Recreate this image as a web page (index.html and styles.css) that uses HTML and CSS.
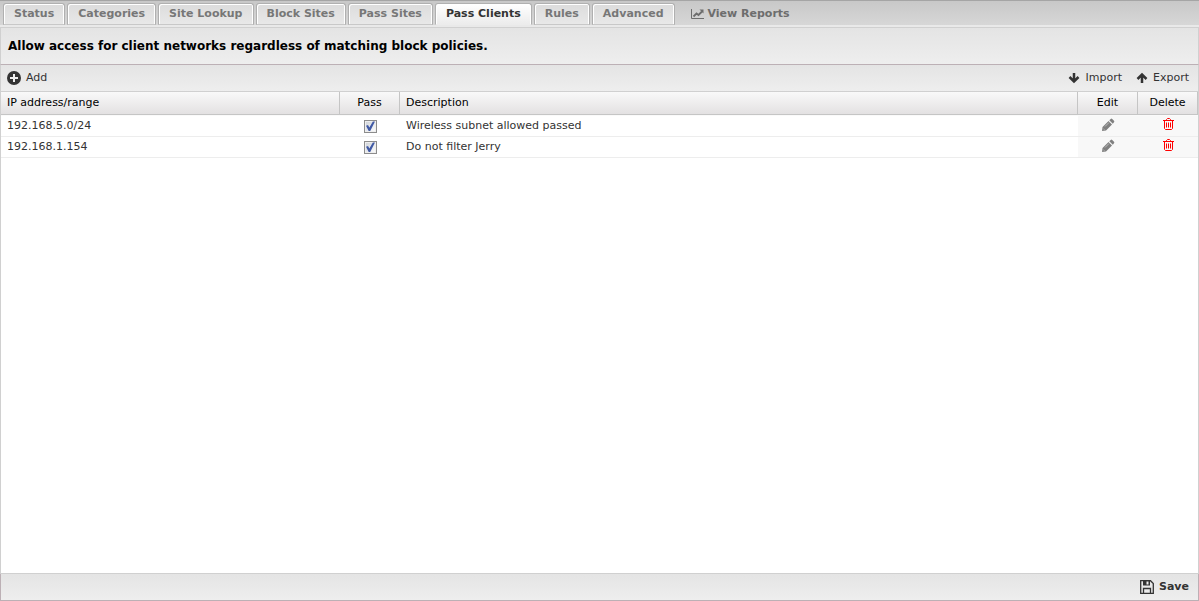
FILE: index.html
```html
<!DOCTYPE html>
<html lang="en">
<head>
<meta charset="utf-8">
<title>Pass Clients</title>
<link rel="stylesheet" href="styles.css">
</head>
<body>
<svg class="defs" aria-hidden="true">
  <symbol id="pencil" viewBox="0 0 14 14">
    <path d="M1 13 L1.500 9 L7.500 3 L11 6.500 L5 12.500 Z M8.300 2.200 L9.700 .9 Q10.500 .3 11.200 .9 L13 2.700 Q13.700 3.500 13 4.300 L11.800 5.700 Z"/>
    <path class="pencil-shine" d="M4 8.500 L8 4.500 M2.300 10.600 L3.400 11.700"/>
  </symbol>
  <symbol id="trash" viewBox="0 0 12 12">
    <path d="M1 2.500 H12 M4.500 2.500 V1.500 L5.500 .5 H7.500 L8.500 1.500 V2.500 M2.500 2.500 V10.500 L3.500 11.500 H9.500 L10.500 10.500 V2.500 M4.500 4.500 V9.500 M6.500 4.500 V9.500 M8.500 4.500 V9.500"/>
  </symbol>
</svg>
<div class="app">
  <nav class="tabs">
    <button class="tab">Status</button>
    <button class="tab">Categories</button>
    <button class="tab">Site Lookup</button>
    <button class="tab">Block Sites</button>
    <button class="tab">Pass Sites</button>
    <button class="tab tab-active">Pass Clients</button>
    <button class="tab">Rules</button>
    <button class="tab">Advanced</button>
    <a class="reports" href="#reports">
      <svg width="14" height="12" viewBox="0 0 14 12"><path d="M.5 1 V10.500 H13" fill="none" stroke="currentColor"/><path d="M2.500 8.500 L5.500 5.500 L7.500 7 L11 3.500" fill="none" stroke="currentColor" stroke-width="1.800"/><path d="M8.500 1.500 H12.500 V5.500 Z" fill="currentColor"/></svg>
      View Reports
    </a>
  </nav>
  <h1 class="title">Allow access for client networks regardless of matching block policies.</h1>
  <div class="toolbar">
    <button class="tool">
      <svg width="14" height="14" viewBox="0 0 14 14"><circle cx="7" cy="7" r="7" fill="#333"/><path d="M7 3 V11 M3 7 H11" stroke="#eee" stroke-width="2"/></svg>
      Add
    </button>
    <span class="spacer"></span>
    <button class="tool">
      <svg width="12" height="12" viewBox="0 0 12 12"><path d="M6 1 V9.500 M1.500 5 L6 9.500 L10.500 5" fill="none" stroke="#333" stroke-width="2.500"/></svg>
      Import
    </button>
    <button class="tool">
      <svg width="12" height="12" viewBox="0 0 12 12"><path d="M6 11 V2.500 M1.500 7 L6 2.500 L10.500 7" fill="none" stroke="#333" stroke-width="2.500"/></svg>
      Export
    </button>
  </div>
  <main class="content">
    <table class="grid">
      <colgroup><col class="col-address"><col class="col-small"><col><col class="col-small"><col class="col-small"></colgroup>
      <thead>
        <tr><th>IP address/range</th><th class="center">Pass</th><th>Description</th><th class="center">Edit</th><th class="center">Delete</th></tr>
      </thead>
      <tbody>
        <tr>
          <td>192.168.5.0/24</td>
          <td class="center"><input class="check" type="checkbox" checked aria-label="Pass 192.168.5.0/24"></td>
          <td>Wireless subnet allowed passed</td>
          <td class="action"><button class="icon-button" aria-label="Edit"><svg class="pencil"><use href="#pencil"/></svg></button></td>
          <td class="action"><button class="icon-button" aria-label="Delete"><svg class="trash"><use href="#trash"/></svg></button></td>
        </tr>
        <tr>
          <td>192.168.1.154</td>
          <td class="center"><input class="check" type="checkbox" checked aria-label="Pass 192.168.1.154"></td>
          <td>Do not filter Jerry</td>
          <td class="action"><button class="icon-button" aria-label="Edit"><svg class="pencil"><use href="#pencil"/></svg></button></td>
          <td class="action"><button class="icon-button" aria-label="Delete"><svg class="trash"><use href="#trash"/></svg></button></td>
        </tr>
      </tbody>
    </table>
  </main>
  <footer class="footer">
    <button class="tool save">
      <svg width="14" height="14" viewBox="0 0 14 14"><path d="M.7 .7 H10.500 L13.300 3.500 V13.300 H.7 Z M3.500 13 V8.500 H10.500 V13" fill="none" stroke="#333" stroke-width="1.300"/><path d="M3 1 H10 V5.500 H3 Z" fill="#333"/><path d="M6.500 1.500 H8.500 V4.500 H6.500 Z" fill="#eee"/></svg>
      Save
    </button>
  </footer>
</div>
</body>
</html>
```

FILE: styles.css
```css
* { box-sizing: border-box; }

body {
  margin: 0;
  font: 11px/14px "DejaVu Sans", Verdana, sans-serif;
  color: #333;
}

button {
  font: inherit;
  color: inherit;
  border: 0;
  padding: 0;
  background: none;
}

svg { flex: none; }
.defs { display: none; }

.app {
  display: flex;
  flex-direction: column;
  min-height: 100vh;
}

.tabs {
  display: flex;
  align-items: flex-end;
  gap: 2px;
  height: 27px;
  padding: 1px 3px 2px;
  border-top: 1px solid #a5a5a5;
  background: linear-gradient(#e9e9e9, #e9e9e9) bottom / 100% 2px no-repeat, linear-gradient(#c8c8c8, #d8d8d8);
}

.tab {
  height: 22px;
  padding: 0 10px 1px;
  border: 1px solid #b0b0b0;
  border-bottom-color: #c8c8c8;
  border-radius: 3px 3px 0 0;
  background: linear-gradient(#dcdcdc, #e8e8e8);
  box-shadow: inset 1px 1px #fff, inset -1px 0 #fff;
  font-weight: bold;
  color: #777;
}

.tab-active {
  background: linear-gradient(#fff, #ececec);
  border-bottom-color: #ececec;
  color: #333;
}

.reports {
  display: flex;
  align-items: center;
  gap: 3px;
  height: 22px;
  padding: 0 14px 1px;
  font-weight: bold;
  color: #6d6d6d;
  text-decoration: none;
}

.title {
  margin: 0;
  padding: 10px 7px;
  border: 1px solid #d0d0d0;
  border-bottom-color: #bcb0b5;
  background: linear-gradient(#e4e4e4, #eee);
  font-size: 12px;
  line-height: 16px;
  color: #000;
}

.toolbar, .footer {
  display: flex;
  align-items: center;
  gap: 14px;
  height: 26px;
  padding: 0 9px 0 6px;
  border: solid #d0d0d0;
  border-width: 0 1px;
  background: linear-gradient(#e4e4e4, #eee);
}

.tool {
  display: flex;
  align-items: center;
  gap: 5px;
}

.spacer { flex: 1; }

.content {
  flex: 1;
  border: 1px solid #d0d0d0;
  background: #fff;
}

.grid {
  width: 100%;
  table-layout: fixed;
  border-collapse: separate;
  border-spacing: 0;
}

.col-address { width: 339px; }
.col-small { width: 60px; }

.grid th {
  height: 23px;
  padding: 0 6px;
  border-right: 1px solid #c5c5c5;
  border-bottom: 1px solid #c5c5c5;
  background: linear-gradient(#f9f9f9, #e3e1e2);
  font-weight: normal;
  text-align: left;
  color: #000;
}

.grid td {
  height: 21px;
  padding: 0 6px;
  border-bottom: 1px solid #ededed;
}

.grid tbody tr:first-child td { border-top: 1px solid #fafafa; height: 22px; }

.grid th.center, .grid td.center { text-align: center; }

.grid td.action {
  padding: 0 0 2px;
  background: #f8f8f8;
  text-align: center;
}

.check {
  appearance: none;
  display: block;
  width: 13px;
  height: 13px;
  margin: 0 auto;
  border: 1px solid #8c8c8c;
  background: linear-gradient(135deg, #ccd0d6, #fff);
  box-shadow: inset 0 0 0 1px #eee;
}

.check:checked::after {
  content: "";
  display: block;
  width: 11px;
  height: 11px;
  background: #4059a5;
  clip-path: polygon(14% 48%, 32% 42%, 44% 64%, 76% 8%, 95% 8%, 52% 95%, 38% 95%);
}

.icon-button { display: block; margin: 0 auto; }
.icon-button svg { display: block; }
.pencil { width: 14px; height: 14px; fill: #808080; }
.pencil-shine { fill: none; stroke: #bbb; }
.trash { width: 12px; height: 12px; margin-bottom: 2px; fill: none; stroke: #f00; }

.footer {
  height: 27px;
  justify-content: flex-end;
  border-width: 0 1px 1px;
  border-color: #bcb0b5;
}

.save { font-weight: bold; }
```
